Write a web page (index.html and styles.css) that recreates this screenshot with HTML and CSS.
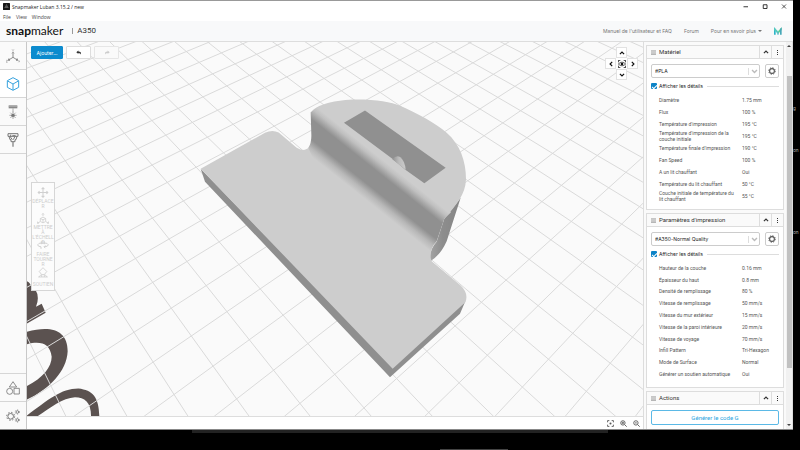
FILE: index.html
```html
<!DOCTYPE html>
<html lang="fr">
<head>
<meta charset="utf-8">
<title>Snapmaker Luban</title>
<link rel="stylesheet" href="styles.css">
</head>
<body>
<svg class="defs" width="0" height="0" aria-hidden="true">
  <symbol id="gear" viewBox="0 0 16 16"><circle cx="8" cy="8" r="4.800" fill="none" stroke="currentColor" stroke-width="2.200"/><circle cx="8" cy="8" r="6.600" fill="none" stroke="currentColor" stroke-width="1.800" stroke-dasharray="2.600 2.580"/></symbol>
  <symbol id="up" viewBox="0 0 10 10"><path d="M1.500 7L5 3.500L8.500 7" fill="none" stroke="currentColor" stroke-width="2"/></symbol>
  <symbol id="down" viewBox="0 0 10 10"><path d="M1.500 3L5 6.500L8.500 3" fill="none" stroke="currentColor" stroke-width="2"/></symbol>
  <symbol id="bars" viewBox="0 0 10 10"><path d="M0 1.500H10M0 4H10M0 6.500H10M0 9H10" fill="none" stroke="currentColor" stroke-width="1.200"/></symbol>
  <symbol id="dots" viewBox="0 0 10 10"><path d="M4 0h2v2h-2zM4 4h2v2h-2zM4 8h2v2h-2z" fill="currentColor"/></symbol>
</svg>
<div class="desktop">
  <div class="window">
    <header class="titlebar">
      <svg class="app-icon" viewBox="0 0 14 14"><rect width="14" height="14" rx="1" fill="#161616"/><path d="M3 9h8M5 5.500h4M4 7.200h6M6 3.500h2" stroke="#999" fill="none"/></svg>
      <span class="title">Snapmaker Luban 3.15.2 / new</span>
      <div class="window-buttons">
        <button aria-label="Réduire"><svg viewBox="0 0 10 10"><path d="M0 5.500H9" stroke="#222" stroke-width="1.800"/></svg></button>
        <button aria-label="Agrandir"><svg viewBox="0 0 10 10"><path d="M1.500 1.500H9V9H1.500Z" fill="none" stroke="#222" stroke-width="1.800"/></svg></button>
        <button aria-label="Fermer"><svg viewBox="0 0 10 10"><path d="M1 1L9 9M9 1L1 9" stroke="#222" stroke-width="1.500"/></svg></button>
      </div>
    </header>
    <nav class="menubar"><a href="#">File</a><a href="#">View</a><a href="#">Window</a></nav>
    <div class="brandbar">
      <span class="logo"><b>snap</b>maker</span><span class="machine">A350</span>
      <nav class="links">
        <a href="#">Manuel de l'utilisateur et FAQ</a>
        <a href="#">Forum</a>
        <a href="#">Pour en savoir plus<i class="caret"></i></a>
        <svg class="m-logo" viewBox="0 0 24 22"><path d="M0 0L5 5V22H0Z" fill="#2bb5c9"/><path d="M0 0L12 12V20L0 8Z" fill="#53c9bd"/><path d="M12 12L23 0V8L12 20Z" fill="#5fd08f"/><path d="M18 5L23 0V22H18Z" fill="#47a8b8"/><path d="M9 13h2v9H9zM13 13h2v9h-2z" fill="#5fb9c9"/></svg>
      </nav>
    </div>
    <div class="workspace">
      <aside class="sidebar">
        <button class="side" aria-label="Espace de travail"><svg viewBox="0 0 42 42"><g fill="none" stroke="#777" stroke-width="2.500"><path d="M21 10V25L8 33M21 25L34 33"/><path d="M18 13l3-3 3 3M9 28l-2 6 5 0M33 28l2 6-5 0"/></g><g fill="none" stroke="#888" stroke-width="1.500"><path d="M18 1l3 3 3-3M21 4v4M0 34h5l-5 6h5M37 34l5 6M42 34l-5 6"/></g></svg></button>
        <button class="side active" aria-label="Impression 3D"><svg viewBox="0 0 42 42"><path d="M21 2L38 11V31L21 40L4 31V11ZM5 12L21 21L37 12M21 21V39" fill="none" stroke="#38a3de" stroke-width="3" stroke-linejoin="round"/></svg></button>
        <button class="side" aria-label="Laser"><svg viewBox="0 0 42 42"><path d="M8 1H34V10H8Z" fill="#888"/><path d="M8 4H34" stroke="#bbb" stroke-width="2"/><path d="M21 10V22M21 20V42M10 31H32M13 23L29 39M29 23L13 39" stroke="#888" stroke-width="2"/><circle cx="21" cy="31" r="5" fill="#777"/></svg></button>
        <button class="side" aria-label="CNC"><svg viewBox="0 0 42 42"><path d="M6 2H36V10H6ZM9 10L12 20H15V26H27V20H30L33 10M14 5V13L19 20M19 8H28L22 20" fill="none" stroke="#777" stroke-width="3"/><path d="M21 26V41" stroke="#888" stroke-width="4"/></svg></button>
        <span class="grow"></span>
        <button class="side" aria-label="Formes"><svg viewBox="0 0 42 42"><path d="M21 2L32 18H10ZM24 22H40V39H24Z" fill="none" stroke="#777" stroke-width="2.500"/><circle cx="11" cy="31" r="9" fill="none" stroke="#777" stroke-width="2.500"/></svg></button>
        <button class="side" aria-label="Paramètres"><svg viewBox="0 0 42 42"><g fill="none" stroke="#777"><circle cx="14" cy="22" r="8.500" stroke-width="3"/><circle cx="14" cy="22" r="12" stroke-width="3" stroke-dasharray="4.400 5"/><circle cx="34" cy="9" r="4" stroke-width="2.500"/><circle cx="34" cy="9" r="6.500" stroke-width="2" stroke-dasharray="3 3.800"/><circle cx="34" cy="33" r="4" stroke-width="2.500"/><circle cx="34" cy="33" r="6.500" stroke-width="2" stroke-dasharray="3 3.800"/></g></svg></button>
      </aside>
      <main class="stage">
        <div class="viewport">
          <svg class="scene" viewBox="27 42 616 375" preserveAspectRatio="xMidYMid slice" role="img" aria-label="Modèle 3D">
            <defs>
              <linearGradient id="wall" gradientUnits="userSpaceOnUse" x1="118" y1="-149" x2="40" y2="-51">
                <stop offset="0" stop-color="#cdcdcd"/><stop offset=".1" stop-color="#c0c0c0"/><stop offset=".3" stop-color="#909090"/><stop offset=".68" stop-color="#909090"/><stop offset=".85" stop-color="#b8b8b8"/><stop offset="1" stop-color="#cdcdcd"/>
              </linearGradient>
              <linearGradient id="side" x1="0" x2="1"><stop offset="0" stop-color="#a2a2a2"/><stop offset=".4" stop-color="#8d8d8d"/><stop offset="1" stop-color="#858585"/></linearGradient>
              <linearGradient id="bump" x1="0" x2="1"><stop offset="0" stop-color="#929292"/><stop offset=".5" stop-color="#bcbcbc"/><stop offset="1" stop-color="#cacaca"/></linearGradient>
            </defs>
            <g transform="translate(0 270) scale(.33333)" fill="#5b5250">
              <path d="M70 34Q92 32 94 56L106 60Q120 82 108 112L125 103L137 130L70 168Z"/>
              <path d="M70 190C150 165 203 180 203 245C200 310 140 365 70 395V355C125 330 155 295 155 262C150 220 120 212 70 227Z"/>
              <path d="M70 446C140 395 180 357 235 357C280 362 298 385 298 445H273C275 400 255 383 225 383C185 385 145 420 105 445Z"/>
            </g>
            <g id="grid" fill="none" stroke="#dadada" stroke-width="1"></g>
            <g transform="translate(180 80) scale(.33333)">
              <path d="M62 268L75 307L630 893L840 703L856 665L638 860Z" fill="#8f8f8f"/>
              <path d="M62 268L255 160Q277 149 296 159L350 205Q373 220 390 200L397 185L770 470L752 515L755 545L842 618Q867 642 856 668L638 868Z" fill="#cdcdcd"/>
              <path d="M842 355L800 485Q782 525 754 543Q745 515 770 487L793 418Z" fill="url(#side)"/>
              <path d="M393 100C405 75 470 60 530 60C590 60 635 68 660 79C715 103 765 130 800 160C840 195 858 245 858 300C856 345 830 375 793 418Z" fill="#cdcdcd"/>
              <path d="M392 98L412 84L813 398L793 418L770 485Q750 505 751 532L400 240L385 205Q395 190 394 165Z" fill="url(#wall)"/>
              <path d="M492 130L555 93L797 265L733 311L675 270L637 238Z" fill="#909090"/>
              <path d="M637 239Q650 226 661 233Q675 244 677 271Z" fill="url(#bump)"/>
            </g>
          </svg>
          <div class="edit-tools">
            <button class="add">Ajouter...</button>
            <button aria-label="Annuler"><svg viewBox="0 0 20 16"><path d="M8 1L1 7L8 13V9.500Q14 8.500 15 15Q20 5 8 4.500Z" fill="#333"/></svg></button>
            <button class="off" aria-label="Rétablir" disabled><svg viewBox="0 0 20 16"><path d="M12 1L19 7L12 13V9.500Q6 8.500 5 15Q0 5 12 4.500Z" fill="#ccc"/></svg></button>
          </div>
          <div class="transform-tools">
            <button disabled><svg viewBox="0 0 32 32"><path d="M16 2V30M2 16H30M12 6L16 2L20 6M12 26L16 30L20 26M6 12L2 16L6 20M26 12L30 16L26 20" fill="none" stroke="#d0d0d0" stroke-width="3"/></svg><span>DÉPLACE<br>R</span></button>
            <button disabled><svg viewBox="0 0 36 32"><path d="M18 12L26 16V25L18 29L10 25V16ZM10 16L18 20L26 16M18 20V29M18 9V1M15 4L18 1L21 4M9 26L1 30M1 25V30H6M27 26L35 30M35 25V30H30" fill="none" stroke="#d0d0d0" stroke-width="2.500"/></svg><span>METTRE<br>À<br>L'ÉCHELL<br>E</span></button>
            <button disabled><svg viewBox="0 0 36 32"><path d="M12 20Q2 19 2 14Q3 8 18 8Q33 8 34 14Q34 19 22 20M25 16L21 20L25 24M13 3V12M22 3V12M12 20V26" fill="none" stroke="#d0d0d0" stroke-width="3"/></svg><span>FAIRE<br>TOURNE<br>R</span></button>
            <button disabled><svg viewBox="0 0 32 32"><path d="M16 2L27 13L20 22H12L5 13ZM2 29H30M5 29L10 22M27 29L22 22M12 22V29M20 22V29" fill="none" stroke="#d0d0d0" stroke-width="2.500"/></svg><span class="last">SOUTIEN</span></button>
          </div>
          <div class="view-pad">
            <button class="n" aria-label="Haut"><svg viewBox="0 0 10 10"><use href="#up"/></svg></button>
            <button class="w" aria-label="Gauche"><svg viewBox="0 0 10 10"><path d="M7 1.500L3.500 5L7 8.500" fill="none" stroke="currentColor" stroke-width="2"/></svg></button>
            <button class="c" aria-label="Recentrer"><svg viewBox="0 0 24 24"><path d="M1 7V1H7M17 1H23V7M23 17V23H17M7 23H1V17" fill="none" stroke="currentColor" stroke-width="2.500"/><path d="M1 12Q12 1 23 12Q12 23 1 12Z" fill="none" stroke="currentColor" stroke-width="2"/><circle cx="12" cy="12" r="4" fill="currentColor"/></svg></button>
            <button class="e" aria-label="Droite"><svg viewBox="0 0 10 10"><path d="M3 1.500L6.500 5L3 8.500" fill="none" stroke="currentColor" stroke-width="2"/></svg></button>
            <button class="s" aria-label="Bas"><svg viewBox="0 0 10 10"><use href="#down"/></svg></button>
          </div>
        </div>
        <footer class="zoombar">
          <button aria-label="Ajuster"><svg viewBox="0 0 24 24"><path d="M2 8V2H8M16 2H22V8M22 16V22H16M8 22H2V16" fill="none" stroke="#555" stroke-width="3"/><circle cx="12" cy="12" r="3.500" fill="#555"/></svg></button>
          <button aria-label="Zoom avant"><svg viewBox="0 0 24 24"><circle cx="10" cy="10" r="7.500" fill="none" stroke="#555" stroke-width="3"/><path d="M16 16L23 23M6 10H14M10 6V14" stroke="#555" stroke-width="3"/></svg></button>
          <button aria-label="Zoom arrière"><svg viewBox="0 0 24 24"><circle cx="10" cy="10" r="7.500" fill="none" stroke="#555" stroke-width="3"/><path d="M16 16L23 23M7 10H13" stroke="#555" stroke-width="3"/></svg></button>
        </footer>
      </main>
      <aside class="panel">
        <div class="cards">
          <section class="card">
            <h2><svg class="grip"><use href="#bars"/></svg><span>Matériel</span><button aria-label="Replier"><svg><use href="#up"/></svg></button><button aria-label="Menu"><svg><use href="#dots"/></svg></button></h2>
            <div class="body">
              <div class="pick"><label class="select"><select aria-label="Matériel"><option>#PLA</option></select><svg><use href="#down"/></svg></label><button class="gear" aria-label="Réglages"><svg><use href="#gear"/></svg></button></div>
              <label class="check"><input type="checkbox" checked><span>Afficher les détails</span></label>
              <table>
                <tr><th>Diamètre</th><td>1.75 mm</td></tr>
                <tr><th>Flux</th><td>100 %</td></tr>
                <tr><th>Température d'impression</th><td>195 °C</td></tr>
                <tr><th>Température d'impression de la couche initiale</th><td>195 °C</td></tr>
                <tr><th>Température finale d'impression</th><td>190 °C</td></tr>
                <tr><th>Fan Speed</th><td>100 %</td></tr>
                <tr><th>A un lit chauffant</th><td>Oui</td></tr>
                <tr><th>Température du lit chauffant</th><td>50 °C</td></tr>
                <tr><th>Couche initiale de température du lit chauffant</th><td>55 °C</td></tr>
              </table>
            </div>
          </section>
          <section class="card">
            <h2><svg class="grip"><use href="#bars"/></svg><span>Paramètres d'impression</span><button aria-label="Replier"><svg><use href="#up"/></svg></button><button aria-label="Menu"><svg><use href="#dots"/></svg></button></h2>
            <div class="body">
              <div class="pick"><label class="select"><select aria-label="Profil"><option>#A350-Normal Quality</option></select><svg><use href="#down"/></svg></label><button class="gear" aria-label="Réglages"><svg><use href="#gear"/></svg></button></div>
              <label class="check"><input type="checkbox" checked><span>Afficher les détails</span></label>
              <table class="ten">
                <tr><th>Hauteur de la couche</th><td>0.16 mm</td></tr>
                <tr><th>Épaisseur du haut</th><td>0.8 mm</td></tr>
                <tr><th>Densité de remplissage</th><td>80 %</td></tr>
                <tr><th>Vitesse de remplissage</th><td>50 mm/s</td></tr>
                <tr><th>Vitesse du mur extérieur</th><td>15 mm/s</td></tr>
                <tr><th>Vitesse de la paroi intérieure</th><td>20 mm/s</td></tr>
                <tr><th>Vitesse de voyage</th><td>70 mm/s</td></tr>
                <tr><th>Infill Pattern</th><td>Tri-Hexagon</td></tr>
                <tr><th>Mode de Surface</th><td>Normal</td></tr>
                <tr><th>Générer un soutien automatique</th><td>Oui</td></tr>
              </table>
            </div>
          </section>
          <section class="card">
            <h2><svg class="grip"><use href="#bars"/></svg><span>Actions</span><button aria-label="Replier"><svg><use href="#up"/></svg></button><button aria-label="Menu"><svg><use href="#dots"/></svg></button></h2>
            <div class="body"><button class="generate">Générer le code G</button></div>
          </section>
        </div>
        <div class="scroll"><i class="arrow top"></i><i class="thumb"></i><i class="arrow bottom"></i></div>
      </aside>
    </div>
  </div>
  <div class="behind"><span>g</span><span>on</span><span class="low">on</span></div>
  <div class="taskbar"><i class="strip"></i><i class="tab"></i></div>
</div>
<script src="grid.js"></script>
</body>
</html>
```
FILE: styles.css
```css
* { box-sizing: border-box; }
body { margin: 0; background: #000; font-family: Roboto, "Liberation Sans", sans-serif; font-size: 5px; line-height: 6px; color: #555; }
button { margin: 0; padding: 0; border: 0; background: none; font: inherit; color: inherit; display: flex; align-items: center; justify-content: center; }
a { color: inherit; text-decoration: none; }
svg { display: block; }
.defs { position: absolute; }
.desktop { display: grid; grid-template-columns: 1fr 7px; grid-template-rows: 1fr 20px; height: 100vh; overflow: hidden; }
.window { display: flex; flex-direction: column; min-height: 0; min-width: 0; background: #fff; border-top: 1px solid #999; border-bottom: 1px solid #888; }

.titlebar { display: flex; align-items: center; height: 11px; padding-left: 3px; gap: 2px; flex: none; }
.app-icon { width: 7px; height: 7px; }
.title { font-family: "Open Sans", sans-serif; color: #222; flex: 1; }
.window-buttons { display: flex; gap: 13px; padding-right: 6px; }
.window-buttons button, .window-buttons svg { width: 6px; height: 5px; }
.menubar { display: flex; gap: 5px; height: 9px; padding-left: 3px; flex: none; align-items: center; font-family: "Open Sans", sans-serif; color: #444; }
.brandbar { display: flex; align-items: center; height: 21px; flex: none; background: #f8f9fa; border-bottom: 1px solid #ddd; padding: 0 11px 0 6px; }
.logo { font: 400 12px/16px Lato, sans-serif; color: #111; }
.logo b { font-weight: 700; }
.machine { margin-left: 9px; padding-left: 4px; font-size: 8px; line-height: 6px; border-left: 1px solid #999; color: #333; }
.links { display: flex; align-items: center; gap: 12px; margin-left: auto; font-family: Inter, sans-serif; color: #777; }
.links a { display: flex; align-items: center; gap: 2px; }
.caret { border: 2px solid transparent; border-top-color: #777; border-bottom: 0; }
.m-logo { width: 8px; height: 8px; }

.workspace { display: flex; flex: 1; min-height: 0; }
.sidebar { width: 27px; flex: none; display: flex; flex-direction: column; border-right: 1px solid #c8c8c8; background: #fafafa; }
.side { height: 28px; border-bottom: 1px solid #d6d6d6; }
.side svg { width: 14px; height: 14px; }
.side.active { background: #fff; }
.grow { flex: 1; }
.grow ~ .side { border-bottom: 0; border-top: 1px solid #d6d6d6; }

.stage { flex: 1; min-width: 0; display: flex; flex-direction: column; }
.viewport { position: relative; flex: 1; min-height: 0; background: #fafafa; border-bottom: 1px solid #ddd; overflow: hidden; }
.scene { width: 100%; height: 100%; }
.edit-tools { position: absolute; left: 4px; top: 4px; display: flex; gap: 3px; }
.edit-tools button { width: 25px; height: 13px; background: #fff; border: 1px solid #ddd; border-radius: 1px; }
.edit-tools .add { width: 32px; background: #0c8bce; border-color: #0c8bce; color: #fff; font-family: Inter, sans-serif; }
.edit-tools .off { background: #fafafa; border-color: #e6e6e6; }
.edit-tools svg { width: 6px; height: 5px; }
.transform-tools { position: absolute; left: 4px; top: 140px; width: 24px; border: 1px solid #d6d6d6; background: #fcfcfc; }
.transform-tools button { width: 100%; height: 26px; flex-direction: column; justify-content: flex-start; padding-top: 4px; gap: 1px; color: #ccc; line-height: 5px; }
.transform-tools button + button { height: 27px; }
.transform-tools svg { width: 12px; height: 11px; flex: none; }
.transform-tools .last { padding-top: 3px; }
.view-pad { position: absolute; top: 5px; right: 5px; display: grid; grid-template: repeat(3, 11px) / repeat(3, 11px); grid-template-areas: ". n ." "w c e" ". s ."; color: #111; }
.view-pad button { background: #fff; border: 1px solid #e2e2e2; }
.view-pad svg { width: 6px; height: 6px; }
.n { grid-area: n; } .w { grid-area: w; } .e { grid-area: e; } .s { grid-area: s; }
.view-pad .c { grid-area: c; border: 0; }
.view-pad .c svg { width: 8px; height: 8px; }
.zoombar { display: flex; align-items: center; justify-content: flex-end; gap: 6px; height: 12px; flex: none; padding-right: 3px; }
.zoombar svg { width: 7px; height: 7px; }

.panel { width: 150px; flex: none; display: flex; background: #fafafa; border-left: 1px solid #ddd; }
.cards { flex: 1; min-width: 0; display: flex; flex-direction: column; gap: 3px; padding: 3px 2px 0; overflow: hidden; }
.card { flex: none; border: 1px solid #ddd; background: #fff; }
.card h2 { display: flex; align-items: stretch; height: 13px; margin: 0; padding-left: 4px; border-bottom: 1px solid #ddd; background: #fafafa; font-size: 6px; font-weight: 400; line-height: 12px; color: #333; }
.card h2 span { flex: 1; padding-left: 3px; }
.card h2 svg { width: 5px; height: 5px; }
.card h2 .grip { align-self: center; color: #888; }
.card h2 button { width: 12px; border-left: 1px solid #ddd; }
.card h2 button:first-of-type svg { width: 6px; height: 6px; }
.body { padding: 5px 4px 7px; }
.pick { display: flex; gap: 5px; }
.select { position: relative; flex: 1; }
.select select { appearance: none; display: block; width: 100%; height: 14px; border: 1px solid #ccc; border-radius: 2px; background: #fff; padding: 0 3px; font: 5px/6px Inter, sans-serif; color: #222; }
.select svg { position: absolute; right: 0; top: 4px; width: 12px; height: 7px; border-left: 1px solid #ddd; color: #bbb; }
.gear { width: 14px; height: 14px; border: 1px solid #ccc; border-radius: 2px; }
.gear svg { width: 8px; height: 8px; color: #555; }
.check { display: flex; align-items: center; gap: 2px; height: 6px; margin: 5px 0; color: #222; font-family: Inter, sans-serif; }
.check::after { content: ""; flex: 1; height: 1px; margin-left: 2px; background: #ddd; }
.check input { appearance: none; margin: 0; width: 6px; height: 6px; background: #0c83c7; border-radius: 1px; display: grid; place-items: center; }
.check input::after { content: ""; width: 2px; height: 4px; border: solid #fff; border-width: 0 1px 1px 0; transform: rotate(45deg); }
table { width: 100%; border-collapse: collapse; }
tr { height: 12px; }
.ten { height: 118px; }
.ten tr { height: auto; }
th, td { padding: 0; font-weight: 400; text-align: left; vertical-align: middle; color: #555; }
th { padding: 0 6px 0 8px; }
td { width: 37px; }
.generate { width: 100%; height: 15px; border: 1px solid #5bb9e6; border-radius: 2px; background: #fff; color: #2aa5e0; font-size: 6px; }
.scroll { width: 7px; background: #f1f1f1; border-right: 1px solid #ddd; display: flex; flex-direction: column; align-items: center; padding: 3px 0 3px; }
.thumb { width: 5px; height: 292px; margin-top: 29px; background: #c1c1c1; }
.arrow { border: 2px solid transparent; }
.arrow.top { border-bottom-color: #444; border-top: 0; }
.arrow.bottom { border-top-color: #444; border-bottom: 0; margin-top: auto; }

.behind { display: flex; flex-direction: column; gap: 36px; padding-top: 105px; overflow: hidden; color: #aaa; }
.behind .low { margin-top: 40px; }
.taskbar { grid-column: 1 / 3; display: flex; flex-direction: column; justify-content: space-between; }
.strip { width: 52%; height: 3px; margin-left: 24%; background: #222; }
.tab { width: 68px; height: 1px; margin-left: 55%; background: #444; }
```
FILE: grid.js
```js
// Build plate grid: two pencils of lines that meet on one horizon,
// evenly spaced along the baseline.
const base = 417;
const horizon = -385;
const families = [
  { apex: -328, start: 66, step: 61.1, count: 34 },
  { apex: 1246, start: -1190, step: 70.2, count: 31 }
];
let d = "";
for (const f of families) {
  for (let i = -6; i < f.count; i++) {
    d += `M${f.apex} ${horizon}L${(f.start + i * f.step).toFixed(1)} ${base}`;
  }
}
const path = document.createElementNS("http://www.w3.org/2000/svg", "path");
path.setAttribute("d", d);
document.getElementById("grid").appendChild(path);
```
